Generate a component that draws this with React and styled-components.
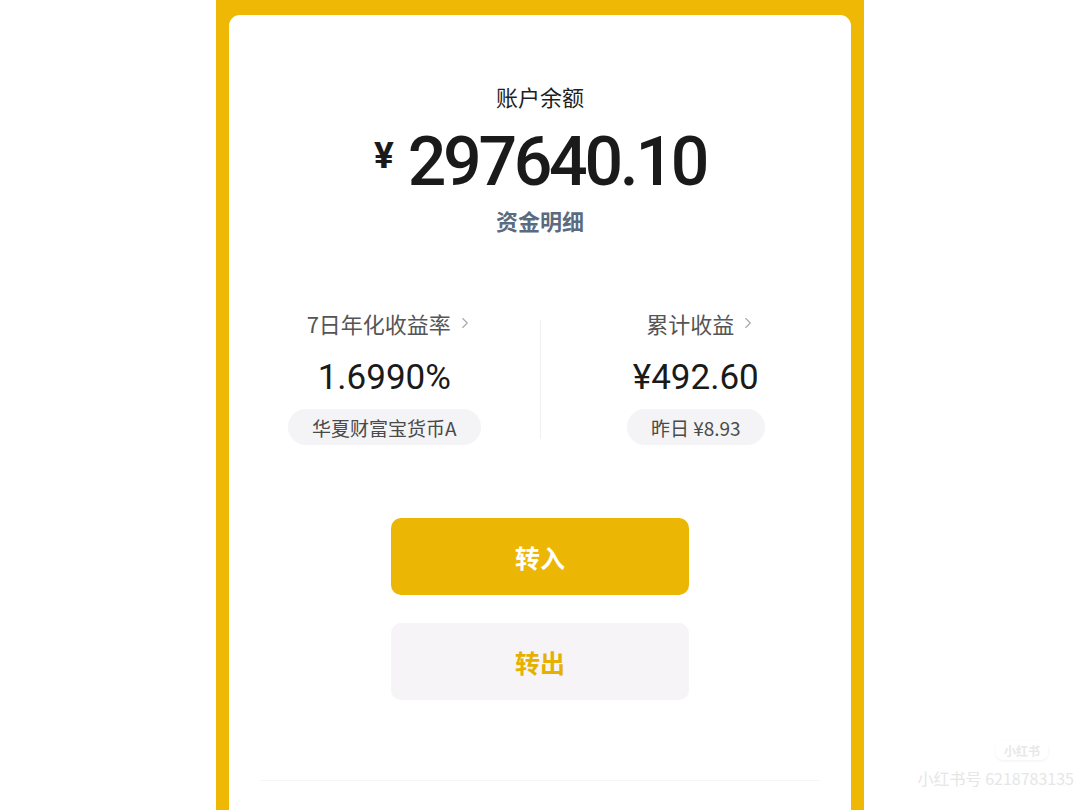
import React from 'react';
import styled, { createGlobalStyle } from 'styled-components';
import { ChevronRight } from 'lucide-react';

const GlobalStyle = createGlobalStyle`
    html, body {
        margin: 0;
        padding: 0;
        background: #ffffff;
        font-family: 'Noto Sans CJK SC', 'Noto Sans', sans-serif;
    }
`;

const Page = styled.div`
    position: relative;
    width: 1080px;
    height: 810px;
    overflow: hidden;
    display: flex;
    justify-content: center;
    background: #ffffff;
`;

const Frame = styled.div`
    width: 648px;
    padding: 15px 13px 0 13px;
    box-sizing: border-box;
    background: #efb805;
    display: flex;
`;

const Card = styled.div`
    flex: 1;
    background: #ffffff;
    border-radius: 11px 11px 0 0;
    display: flex;
    flex-direction: column;
    align-items: center;
    padding-top: 66px;
`;

const Title = styled.div`
    font-size: 22px;
    line-height: 30px;
    color: #1f1f1f;
`;

const Amount = styled.div`
    margin-top: 15px;
    display: flex;
    align-items: center;
    gap: 14px;
    color: #1a1a1a;
    font-family: Roboto, 'Noto Sans CJK SC', sans-serif;
    line-height: 72px;
`;

const Yen = styled.span`
    font-size: 37px;
    font-weight: 700;
    margin-top: -12px;
`;

const Big = styled.span`
    font-size: 68px;
    font-weight: 500;
    letter-spacing: -3.3px;
`;

const DetailLink = styled.div`
    margin-top: 7px;
    font-size: 22px;
    line-height: 30px;
    font-weight: 700;
    color: #5b6b7f;
`;

const Stats = styled.div`
    margin-top: 73px;
    width: 100%;
    display: grid;
    grid-template-columns: 1fr 1px 1fr;
    align-items: stretch;
`;

const Col = styled.div`
    display: flex;
    flex-direction: column;
    align-items: center;
`;

const VLine = styled.div`
    background: #f0f0f0;
    margin: 12px 0 6px;
`;

const Label = styled.div`
    display: flex;
    align-items: center;
    gap: 5px;
    font-size: 22px;
    line-height: 30px;
    color: #555555;
    padding-left: 12px;

    svg {
        color: #a8a8a8;
    }
`;

const Value = styled.div`
    margin-top: 20px;
    font-family: Roboto, 'Noto Sans CJK SC', sans-serif;
    font-size: 35px;
    line-height: 40px;
    font-weight: 400;
    color: #1a1a1a;
`;

const Pill = styled.div`
    margin-top: 11px;
    height: 36px;
    padding: 0 24px;
    border-radius: 18px;
    background: #f4f3f5;
    display: flex;
    align-items: center;
    font-size: 19px;
    color: #4a4a4a;
`;

const Buttons = styled.div`
    margin-top: 73px;
    display: flex;
    flex-direction: column;
    gap: 28px;
`;

const Btn = styled.button`
    width: 298px;
    height: 77px;
    border: none;
    border-radius: 10px;
    background: ${(p) => (p.$primary ? '#ecb704' : '#f6f4f6')};
    color: ${(p) => (p.$primary ? '#ffffff' : '#e6b000')};
    font-family: 'Noto Sans CJK SC', sans-serif;
    font-size: 25px;
    font-weight: 700;
    cursor: pointer;
`;

const Rule = styled.div`
    margin-top: 80px;
    width: 560px;
    height: 1px;
    background: #f6f6f6;
`;

const Watermark = styled.div`
    position: absolute;
    right: 6px;
    bottom: 20px;
    display: flex;
    flex-direction: column;
    align-items: flex-end;
    gap: 6px;
    color: #e6e6e6;
    font-size: 16px;
`;

const Badge = styled.span`
    padding: 1px 8px;
    border-radius: 7px;
    font-size: 12px;
    font-weight: 700;
    color: #e8e8e8;
    box-shadow: 0 1px 3px rgba(0, 0, 0, 0.06);
    margin-right: 26px;
`;

export default function App() {
    return (
        <>
            <GlobalStyle />
            <Page>
                <Frame>
                    <Card>
                        <Title>账户余额</Title>
                        <Amount>
                            <Yen>¥</Yen>
                            <Big>297640.10</Big>
                        </Amount>
                        <DetailLink>资金明细</DetailLink>

                        <Stats>
                            <Col>
                                <Label>
                                    7日年化收益率
                                    <ChevronRight size={18} strokeWidth={1.5} />
                                </Label>
                                <Value>1.6990%</Value>
                                <Pill>华夏财富宝货币A</Pill>
                            </Col>
                            <VLine />
                            <Col>
                                <Label>
                                    累计收益
                                    <ChevronRight size={18} strokeWidth={1.5} />
                                </Label>
                                <Value>¥492.60</Value>
                                <Pill>昨日 ¥8.93</Pill>
                            </Col>
                        </Stats>

                        <Buttons>
                            <Btn $primary>转入</Btn>
                            <Btn>转出</Btn>
                        </Buttons>

                        <Rule />
                    </Card>
                </Frame>
                <Watermark>
                    <Badge>小红书</Badge>
                    <span>小红书号 6218783135</span>
                </Watermark>
            </Page>
        </>
    );
}
